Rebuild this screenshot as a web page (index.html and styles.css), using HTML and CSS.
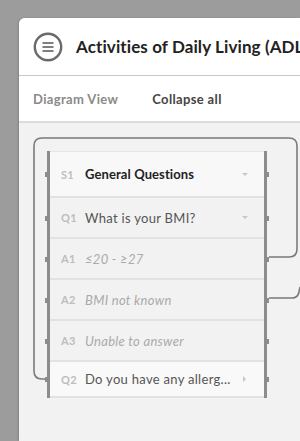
FILE: index.html
```html
<!DOCTYPE html>
<html>
<head>
<meta charset="utf-8">
<link rel="stylesheet" href="styles.css">
</head>
<body>
<div class="panel">
  <header class="header">
    <span class="menu-btn">
      <svg width="30" height="30" viewBox="0 0 30 30">
        <circle cx="15" cy="15" r="13.2" fill="none" stroke="#6a6a6a" stroke-width="2.4"/>
        <path d="M9.5 11h11M9.5 15h11M9.5 19h11" stroke="#555" stroke-width="1.6" fill="none"/>
      </svg>
    </span>
    <h1 class="title">Activities of Daily Living (ADL)</h1>
  </header>
  <nav class="toolbar">
    <span class="tool tool-muted">Diagram View</span>
    <span class="tool">Collapse all</span>
  </nav>
  <main class="canvas">
    <svg class="edges" width="281" height="318" viewBox="0 0 281 318">
      <path d="M28 256 H23 Q15 256 15 248 V23 Q15 15 23 15 H270 Q278 15 278 23 V126 Q278 134 270 134 H250" fill="none" stroke="#7a7a7a" stroke-width="1.6"/>
      <path d="M250 175 H273 Q279 175 280 169 L281 164" fill="none" stroke="#7a7a7a" stroke-width="1.6"/>
    </svg>
    <div class="node">
      <div class="row row-section">
        <span class="pin pin-l"></span><span class="pin pin-r"></span>
        <span class="code">S1</span><span class="text strong">General Questions</span>
        <span class="caret-down"></span>
      </div>
      <div class="row">
        <span class="pin pin-l"></span><span class="pin pin-r"></span>
        <span class="code">Q1</span><span class="text">What is your BMI?</span>
        <span class="caret-down"></span>
      </div>
      <div class="row">
        <span class="pin pin-l"></span><span class="pin pin-r"></span>
        <span class="code">A1</span><span class="text answer">≤20 - ≥27</span>
      </div>
      <div class="row">
        <span class="pin pin-l"></span><span class="pin pin-r"></span>
        <span class="code">A2</span><span class="text answer">BMI not known</span>
      </div>
      <div class="row">
        <span class="pin pin-l"></span><span class="pin pin-r"></span>
        <span class="code">A3</span><span class="text answer">Unable to answer</span>
      </div>
      <div class="row row-light">
        <span class="pin pin-l"></span><span class="pin pin-r"></span>
        <span class="code">Q2</span><span class="text">Do you have any allerg...</span>
        <span class="caret-right"></span>
      </div>
    </div>
  </main>
</div>
</body>
</html>
```

FILE: styles.css
```css
* { box-sizing: border-box; }
html, body { margin: 0; height: 100%; }
body {
  background: #9c9c9c;
  padding: 18px 0 0 19px;
  overflow: hidden;
  font-family: Lato, "Open Sans", sans-serif;
}
.panel {
  background: #f2f2f2;
  border-radius: 6px 0 0 0;
  height: 423px;
  overflow: hidden;
  box-shadow: -1px 0 2px rgba(0,0,0,0.15);
}
.header {
  height: 58px;
  background: #fff;
  border-bottom: 1px solid #c8c8c8;
  display: flex;
  align-items: center;
  padding-left: 14px;
  gap: 13px;
  white-space: nowrap;
}
.menu-btn { display: flex; width: 30px; height: 30px; }
.title {
  margin: 0;
  font-size: 17px;
  font-weight: 700;
  color: #222;
  letter-spacing: 0.1px;
}
.toolbar {
  height: 47px;
  background: #fff;
  border-bottom: 2px solid #dcdcdc;
  display: flex;
  align-items: center;
  padding-left: 14px;
  gap: 34px;
}
.tool { font-size: 13px; font-weight: 700; color: #444; letter-spacing: 0.35px; }
.tool-muted { color: #8a8a8a; }
.canvas {
  position: relative;
  padding: 28px 0 0 28px;
}
.edges { position: absolute; left: 0; top: 0; }
.node {
  position: relative;
  width: 220px;
  border-left: 3px solid #8c8c8c;
  border-right: 3px solid #8c8c8c;
  display: flex;
  flex-direction: column;
}
.row {
  position: relative;
  height: 41px;
  display: flex;
  align-items: center;
  background: #f2f2f2;
  border-top: 2px solid #e2e2e2;
  padding-left: 11px;
}
.row-section { height: 45px; background: #f8f8f8; border-top: 1px solid #e6e6e6; }
.row-light { height: 38px; background: #f9f9f9; border-bottom: 2px solid #e2e2e2; }
.code {
  width: 24px;
  font-size: 11px;
  font-weight: 700;
  color: #bdbdbd;
  letter-spacing: 0.3px;
}
.text { font-size: 13px; color: #555; flex: 1; white-space: nowrap; letter-spacing: 0.3px; }
.strong { color: #222; font-weight: 700; letter-spacing: 0.1px; }
.answer { font-style: italic; color: #aaa; }
.caret-down {
  width: 0; height: 0;
  border-left: 3px solid transparent;
  border-right: 3px solid transparent;
  border-top: 3px solid #c8c8c8;
  margin-right: 16px;
}
.caret-right {
  width: 0; height: 0;
  border-top: 3px solid transparent;
  border-bottom: 3px solid transparent;
  border-left: 3px solid #c8c8c8;
  margin-right: 18px;
}
.pin {
  position: absolute;
  top: 50%;
  width: 3px;
  height: 5px;
  margin-top: -2px;
  background: #8c8c8c;
}
.pin-l { left: -5px; }
.pin-r { right: -5px; }
```
